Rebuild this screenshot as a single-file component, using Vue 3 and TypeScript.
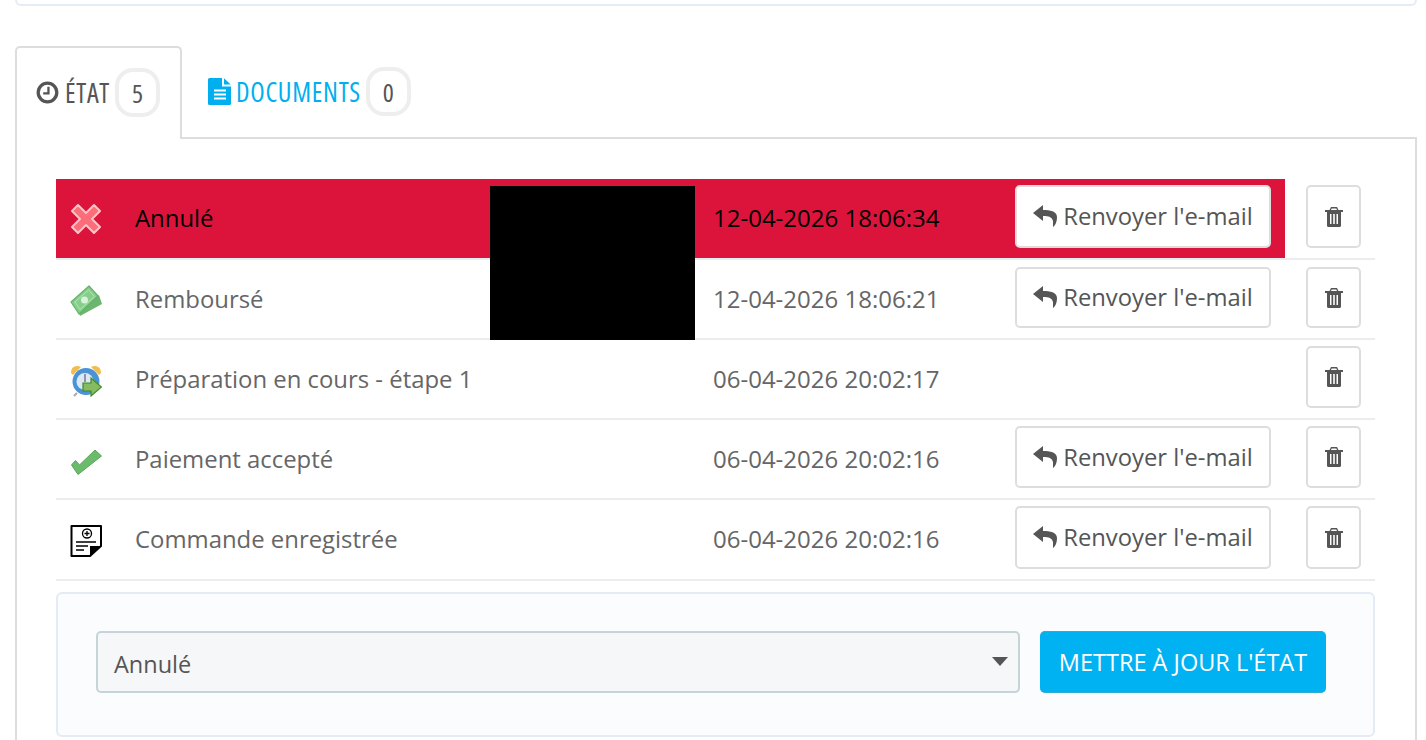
<script setup lang="ts">
interface Row {
  icon: string
  label: string
  date: string
  mail: boolean
  active?: boolean
}
const rows: Row[] = [
  { icon: 'cross', label: 'Annulé', date: '12-04-2026 18:06:34', mail: true, active: true },
  { icon: 'money', label: 'Remboursé', date: '12-04-2026 18:06:21', mail: true },
  { icon: 'clock', label: 'Préparation en cours - étape 1', date: '06-04-2026 20:02:17', mail: false },
  { icon: 'check', label: 'Paiement accepté', date: '06-04-2026 20:02:16', mail: true },
  { icon: 'note', label: 'Commande enregistrée', date: '06-04-2026 20:02:16', mail: true },
]
</script>

<template>
  <div class="page">
    <div class="top-panel"></div>
    <div class="tabs">
      <div class="tab active">
        <svg class="tab-icon" viewBox="0 0 24 24" width="23" height="23">
          <circle cx="12" cy="12" r="9.7" fill="none" stroke="#555" stroke-width="3.4" />
          <path d="M13 6v7H7.5" fill="none" stroke="#555" stroke-width="2.4" />
        </svg>
        <span class="tab-label">ÉTAT</span>
        <span class="badge">5</span>
      </div>
      <div class="tab">
        <svg class="tab-icon doc" viewBox="0 0 23 27" width="23" height="27">
          <path d="M1.500 0H14V8.500H23V25.500a1.500 1.500 0 0 1-1.500 1.500H1.500A1.500 1.500 0 0 1 0 25.500V1.500A1.500 1.500 0 0 1 1.500 0Z" fill="#00aff0" />
          <path d="M16 0.300 22.700 6.500H16Z" fill="#00aff0" />
          <path d="M6 12.500H18M6 16.500H18M6 20.500H18" stroke="#fff" stroke-width="2" />
        </svg>
        <span class="tab-label link">DOCUMENTS</span>
        <span class="badge">0</span>
      </div>
    </div>
    <div class="panel">
      <div class="history">
        <div v-for="row in rows" :key="row.label + row.date" class="row">
          <div class="main" :class="{ active: row.active }">
            <div class="icon-cell">
              <svg v-if="row.icon === 'cross'" viewBox="0 0 32 32" width="32" height="32">
                <path d="M8 2 16 10 24 2 30 8 22 16 30 24 24 30 16 22 8 30 2 24 10 16 2 8Z" fill="#fb6d78" stroke="#ffc4c8" stroke-width="2" stroke-linejoin="round" />
              </svg>
              <svg v-else-if="row.icon === 'money'" viewBox="0 0 32 32" width="32" height="32">
                <path d="M10 31 32 19 29 10 8 24Z" fill="#6cb66f" />
                <path d="M1 17 19 1 28 11 9 29Z" fill="#86cf8b" stroke="#63b268" stroke-width="1.200" stroke-linejoin="round" />
                <path d="M5 17 18.500 5 24.500 11.500 10 24.500Z" fill="none" stroke="#b5e4b8" stroke-width="1" />
                <circle cx="14.500" cy="15" r="3.500" fill="#d9f3da" />
              </svg>
              <svg v-else-if="row.icon === 'clock'" viewBox="0 0 32 32" width="32" height="32">
                <path d="M1 8C1 1 7 0 11 2L3 10ZM31 8C31 1 25 0 21 2L29 10Z" fill="#f0bd4f" />
                <circle cx="16" cy="16.500" r="13.500" fill="#4a93d6" />
                <circle cx="15" cy="16.500" r="8.500" fill="#dce9f2" />
                <path d="M15 9V17" stroke="#778" stroke-width="1.500" />
                <path d="M4 31 7 28" stroke="#aaa" stroke-width="2" />
                <path d="M13 18H21V13L31.500 22 21 31V26H13Z" fill="#86bb62" stroke="#3f8a2a" stroke-width="1.200" />
              </svg>
              <svg v-else-if="row.icon === 'check'" viewBox="0 0 32 32" width="32" height="32">
                <path d="M1.500 20 5.500 15.500 9.500 20 25 5 31.500 11 8 29.500Z" fill="#6cbb6c" stroke="#5aa55c" stroke-width="1" stroke-linejoin="round" />
              </svg>
              <svg v-else viewBox="0 0 32 32" width="32" height="32">
                <path d="M1.500 1H31V21L20 31H1.500Z" fill="#fff" stroke="#000" stroke-width="2" stroke-linejoin="round" />
                <path d="M31 21H20V31Z" fill="#000" />
                <circle cx="17" cy="8.500" r="4.500" fill="none" stroke="#000" stroke-width="1.300" />
                <path d="M14.500 8.500H19.500M17 6V11" stroke="#000" stroke-width="1.300" />
                <path d="M6 17H26M6 21H18M6 25H14" stroke="#000" stroke-width="1.400" />
              </svg>
            </div>
            <div class="label">{{ row.label }}</div>
            <div class="date">{{ row.date }}</div>
            <div class="mail-cell">
              <button v-if="row.mail" class="btn mail" type="button">
                <svg viewBox="0 0 24 22" width="24" height="22">
                  <path d="M10 0 0 8 10 16V11C16 11 19 12 20 16L20 22C23 20 24 15.500 24 12 24 6 17 5 10 5Z" fill="#555" />
                </svg>
                <span>Renvoyer l'e-mail</span>
              </button>
            </div>
          </div>
          <div class="delete-cell">
            <button class="btn del" type="button" aria-label="Supprimer">
              <svg viewBox="0 0 18 20" width="18" height="20">
                <path fill-rule="evenodd" d="M6 0H12L13.500 3H18V5H16V18.500A1.500 1.500 0 0 1 14.500 20H3.500A1.500 1.500 0 0 1 2 18.500V5H0V3H4.500ZM6 3H12L11.300 1.500H6.700ZM5 7V17H6.500V7ZM8.200 7V17H9.800V7ZM11.500 7V17H13V7Z" fill="#555" />
              </svg>
            </button>
          </div>
        </div>
        <div class="redacted"></div>
      </div>
      <div class="well">
        <div class="select">
          <span>Annulé</span>
          <i class="caret"></i>
        </div>
        <button class="btn-primary" type="button">METTRE À JOUR L'ÉTAT</button>
      </div>
    </div>
  </div>
</template>

<style>
html,
body {
  margin: 0;
  height: 740px;
  overflow: hidden;
  background: #fff;
}
</style>

<style scoped>
.page {
  width: 1426px;
  height: 740px;
  overflow: hidden;
  box-sizing: border-box;
  padding: 0 9px 0 15px;
  font-family: "Open Sans", "Liberation Sans", sans-serif;
  color: #666;
  font-size: 23.800px;
}
.top-panel {
  height: 6px;
  box-sizing: border-box;
  border: 2px solid #e4edf6;
  border-top: 0;
  border-radius: 0 0 6px 6px;
}
.tabs {
  display: flex;
  margin-top: 40px;
  height: 91px;
  position: relative;
  z-index: 1;
}
.tab {
  display: flex;
  align-items: center;
  gap: 5px;
  box-sizing: border-box;
  height: 93px;
  padding: 0 0 2px 26px;
}
.tab.active {
  width: 167px;
  background: #fff;
  border: 2px solid #ddd;
  border-bottom: 0;
  border-radius: 5px 5px 0 0;
  padding-left: 19px;
}
.tab-icon {
  flex: none;
  margin-right: 1px;
}
.tab-icon.doc {
  margin-right: 0;
}
.tab-label {
  font-stretch: 75%;
  font-size: 26.500px;
  letter-spacing: 0.700px;
  color: #555;
}
.tab-label.link {
  color: #00aff0;
}
.badge {
  display: flex;
  align-items: center;
  justify-content: center;
  box-sizing: border-box;
  width: 45px;
  height: 49px;
  border: 4px solid #eee;
  border-radius: 18px;
  background: #fff;
  font-stretch: 75%;
  font-size: 26px;
  color: #555;
}
.panel {
  border: 2px solid #ddd;
  border-bottom: 0;
  padding: 40px 40px 0 39px;
  height: 610px;
  box-sizing: border-box;
}
.history {
  position: relative;
}
.redacted {
  position: absolute;
  left: 434px;
  top: 7px;
  width: 205px;
  height: 154px;
  background: #000;
}
.row {
  display: flex;
  height: 80px;
  box-sizing: border-box;
  border-bottom: 2px solid #eaedf0;
}
.row:first-child,
.row:nth-child(5) {
  height: 81px;
}
.main {
  display: flex;
  align-items: center;
  width: 1229px;
  flex: none;
  height: 79px;
}
.main.active {
  background: #dc143c;
  color: #000;
}
.icon-cell {
  width: 79px;
  padding: 2px 0 0 14px;
  box-sizing: border-box;
  display: flex;
  align-items: center;
  flex: none;
}
.row:first-child .icon-cell {
  padding-top: 0;
}
.label {
  width: 578px;
  flex: none;
  font-size: 23.900px;
  margin-bottom: 2px;
}
.date {
  width: 302px;
  flex: none;
  font-size: 24px;
  margin-bottom: 2px;
}
.mail-cell {
  flex: 1;
  height: 100%;
  padding-top: 6px;
  box-sizing: border-box;
}
.btn {
  display: flex;
  align-items: center;
  justify-content: center;
  background: #fff;
  border: 2px solid #ddd;
  border-radius: 5px;
  font: inherit;
  color: #555;
  padding: 0;
  box-sizing: border-box;
  height: 62px;
}
.mail {
  width: 256px;
  gap: 6px;
  padding-bottom: 1px;
}
.delete-cell {
  flex: 1;
  padding-left: 21px;
  padding-top: 6px;
  box-sizing: border-box;
}
.del {
  width: 55px;
}
.row:first-child .btn,
.row:nth-child(5) .btn {
  height: 63px;
}
.row:nth-child(2) .btn {
  height: 61px;
}
.row:nth-child(2) .mail-cell,
.row:nth-child(2) .delete-cell {
  padding-top: 7px;
}
.well {
  margin-top: 11px;
  height: 145px;
  box-sizing: border-box;
  background: #fbfcfe;
  border: 2px solid #e3ecf5;
  border-radius: 6px;
  padding: 37px 47px 0 38px;
  display: flex;
  gap: 20px;
  align-items: flex-start;
  font-size: 23.500px;
}
.select {
  flex: 1;
  height: 62px;
  box-sizing: border-box;
  background: #f5f7f8;
  border: 2px solid #c4d4d9;
  border-radius: 5px;
  padding: 4px 10px 0 16px;
  display: flex;
  align-items: center;
  justify-content: space-between;
  color: #555;
}
.caret {
  width: 0;
  height: 0;
  border-left: 8px solid transparent;
  border-right: 8px solid transparent;
  border-top: 9px solid #555;
  margin-bottom: 5px;
}
.btn-primary {
  width: 286px;
  height: 62px;
  background: #00b2f2;
  border: 0;
  border-bottom: 1px solid #2eacd2;
  border-top: 1px solid #2eacd2;
  border-radius: 5px;
  color: #fff;
  font: inherit;
  padding: 0;
}
</style>
